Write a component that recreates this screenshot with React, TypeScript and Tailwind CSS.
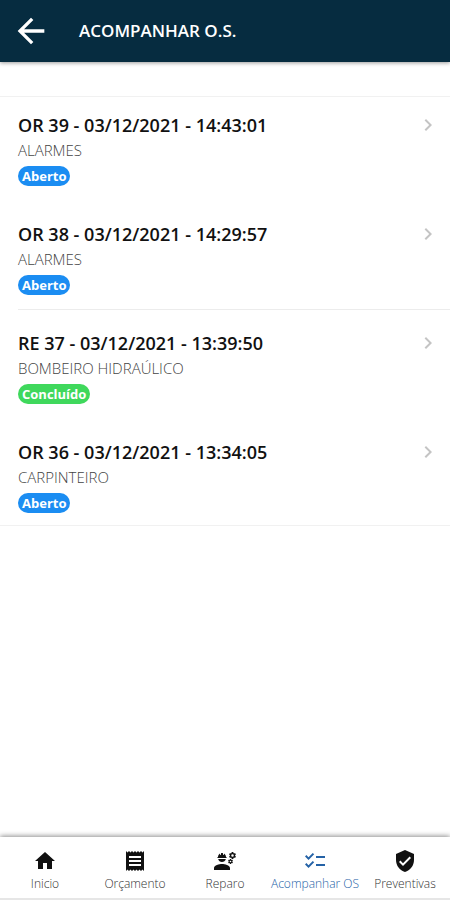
import clsx from 'clsx'
import type { IconType } from 'react-icons'
import {
  MdArrowBack,
  MdChecklist,
  MdChevronRight,
  MdEngineering,
  MdHome,
  MdReceipt,
  MdVerifiedUser,
} from 'react-icons/md'

interface Order {
  code: string
  date: string
  time: string
  category: string
  status: 'Aberto' | 'Concluído'
}

const orders: Order[] = [
  { code: 'OR 39', date: '03/12/2021', time: '14:43:01', category: 'ALARMES', status: 'Aberto' },
  { code: 'OR 38', date: '03/12/2021', time: '14:29:57', category: 'ALARMES', status: 'Aberto' },
  { code: 'RE 37', date: '03/12/2021', time: '13:39:50', category: 'BOMBEIRO HIDRAÚLICO', status: 'Concluído' },
  { code: 'OR 36', date: '03/12/2021', time: '13:34:05', category: 'CARPINTEIRO', status: 'Aberto' },
]

const tabs: { label: string; icon: IconType; active?: boolean }[] = [
  { label: 'Inicio', icon: MdHome },
  { label: 'Orçamento', icon: MdReceipt },
  { label: 'Reparo', icon: MdEngineering },
  { label: 'Acompanhar OS', icon: MdChecklist, active: true },
  { label: 'Preventivas', icon: MdVerifiedUser },
]

function Header() {
  return (
    <header className="z-10 flex h-[62px] shrink-0 items-center gap-7 bg-[#062c40] px-[11px] text-white shadow-[0_1px_4px_rgba(0,0,0,0.4)]">
      <button type="button" aria-label="Voltar" className="flex size-10 items-center justify-center">
        <MdArrowBack className="size-10" />
      </button>
      <h1 className="text-[17px] font-semibold">ACOMPANHAR O.S.</h1>
    </header>
  )
}

function OrderRow({ order }: { order: Order }) {
  return (
    <li className="group pl-[18px] first:-mt-[5px] last:border-b last:border-[#f1f1f1] last:pl-0">
      <button
        type="button"
        className="flex w-full items-start justify-between border-b border-transparent pt-5 pr-[10px] pb-[14px] text-left group-last:border-b-0 group-last:pb-3 group-last:pl-[18px] group-nth-2:border-[#ececec]"
      >
        <div>
          <h2 className="text-lg leading-[26px] font-semibold text-[#111]">
            {order.code} - {order.date} - {order.time}
          </h2>
          <p className="text-[15px] leading-6 font-light text-[#444]">{order.category}</p>
          <span
            className={clsx(
              'mt-1 flex h-5 w-fit items-center rounded-full px-1 text-[13px] leading-5 font-bold text-white',
              order.status === 'Aberto' ? 'bg-[#1b8df2]' : 'bg-[#3fd85c]',
            )}
          >
            {order.status}
          </span>
        </div>
        <MdChevronRight className="mt-px size-6 text-[#c4c4c4]" />
      </button>
    </li>
  )
}

function TabBar() {
  return (
    <nav className="grid shrink-0 grid-cols-5 border-b-2 border-[#e6e6e6] bg-white pt-3 pb-1 shadow-[0_-1px_5px_rgba(0,0,0,0.45)]">
      {tabs.map(({ label, icon: Icon, active }) => (
        <button
          key={label}
          type="button"
          aria-current={active ? 'page' : undefined}
          className={clsx('flex flex-col items-center gap-px', active ? 'text-[#2462a6]' : 'text-[#111]')}
        >
          <Icon className="size-6" />
          <span
            className={clsx(
              'text-xs leading-5 font-light whitespace-nowrap',
              active ? 'text-[#2462a6]' : 'text-[#333]',
            )}
          >
            {label}
          </span>
        </button>
      ))}
    </nav>
  )
}

export default function App() {
  return (
    <div className="flex min-h-screen flex-col bg-white font-['Open_Sans','Noto_Sans',sans-serif]">
      <Header />
      <main className="flex-1 pt-[34px]">
        <ul className="border-t border-[#f1f1f1]">
          {orders.map((order) => (
            <OrderRow key={order.code} order={order} />
          ))}
        </ul>
      </main>
      <TabBar />
    </div>
  )
}
